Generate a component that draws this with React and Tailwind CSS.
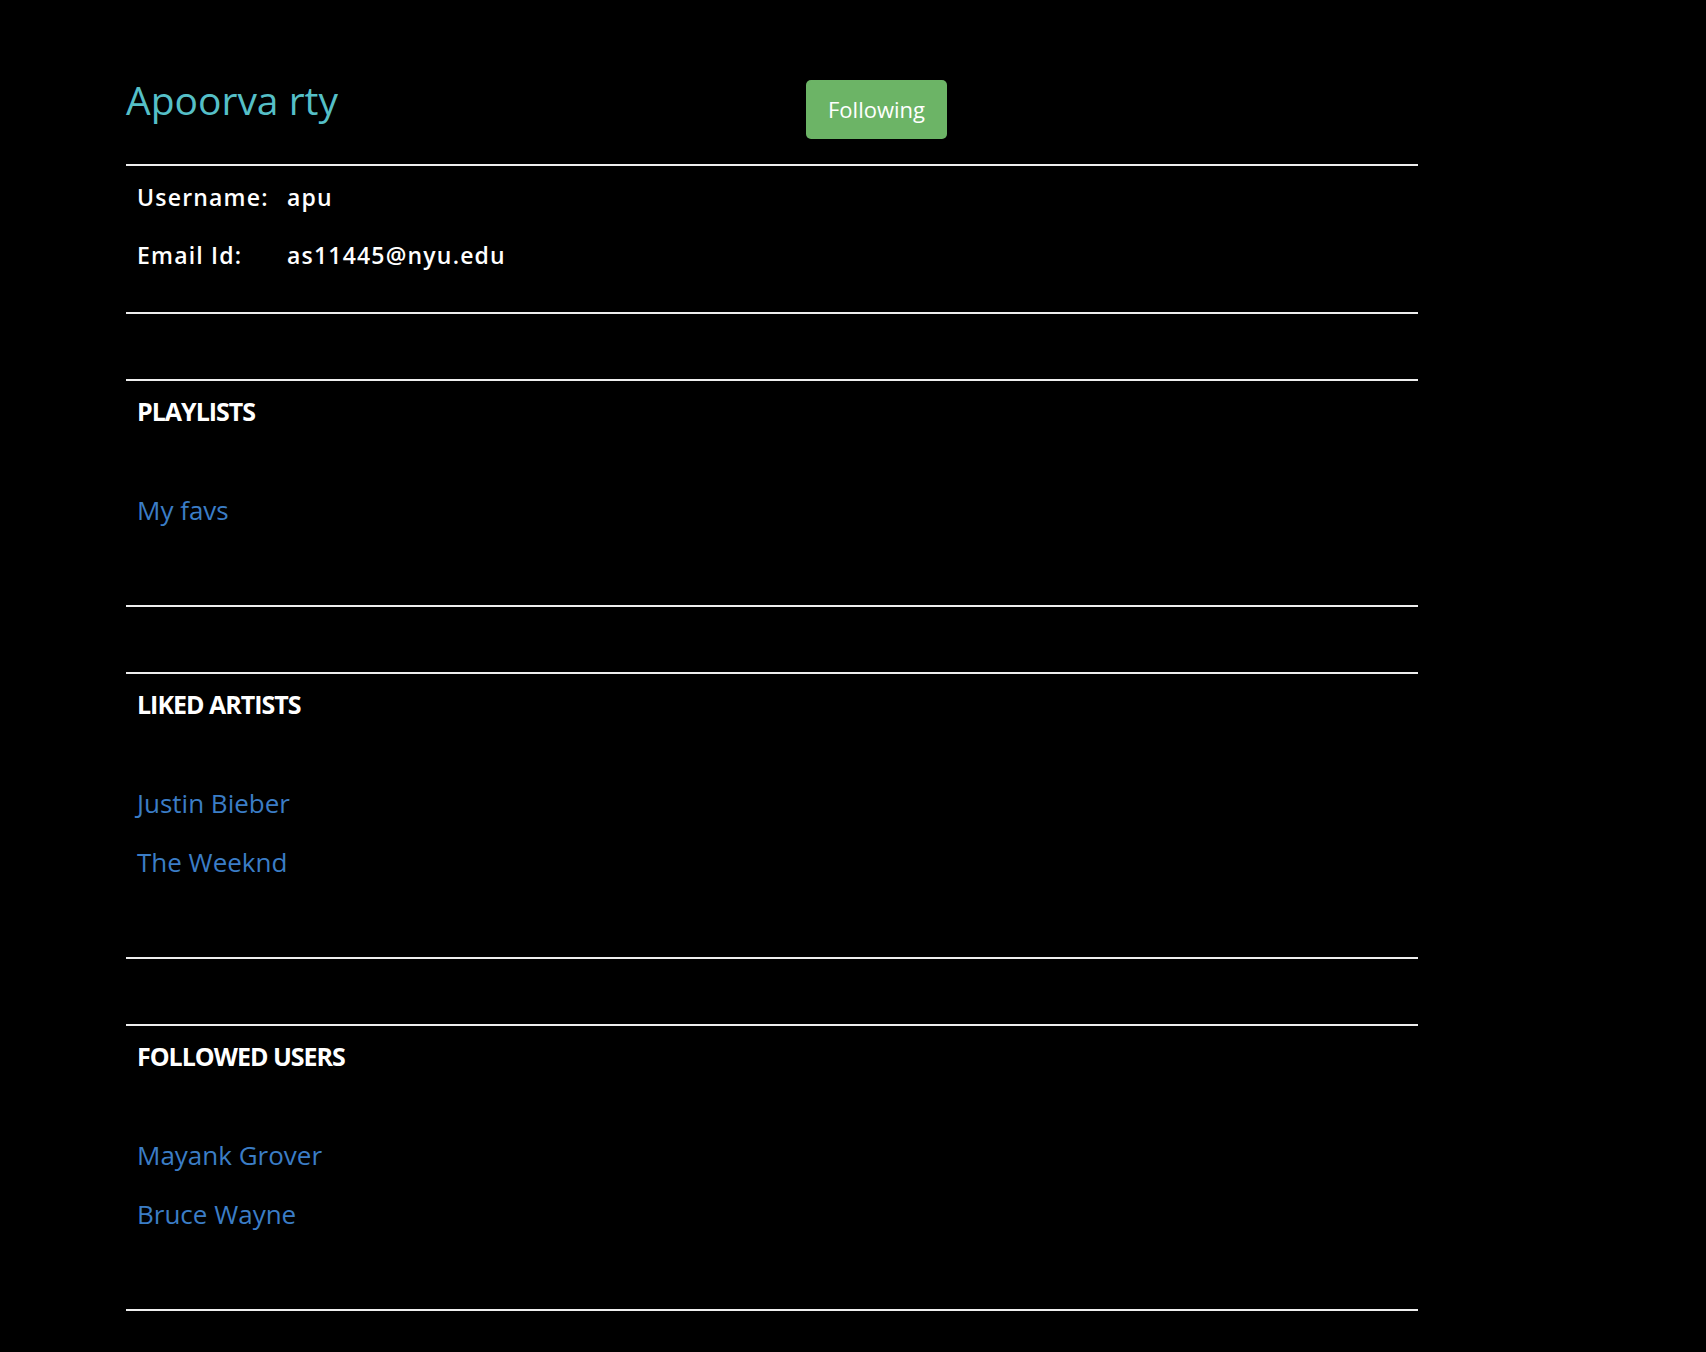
const profile = {
  name: "Apoorva rty",
  username: "apu",
  email: "as11445@nyu.edu",
};

const sections = [
  { title: "PLAYLISTS", items: ["My favs"] },
  { title: "LIKED ARTISTS", items: ["Justin Bieber", "The Weeknd"] },
  { title: "FOLLOWED USERS", items: ["Mayank Grover", "Bruce Wayne"] },
];

function InfoRow({ label, value }) {
  return (
    <div className="flex h-[58px] items-center text-[23px] font-semibold leading-[58px] tracking-[1.2px] text-white">
      <span className="w-[150px] shrink-0">{label}</span>
      <span>{value}</span>
    </div>
  );
}

function ListSection({ title, items }) {
  return (
    <section className="mt-[65px] border-y-2 border-[#eeeeee] pl-[11px] pb-[65px] pt-[15px]">
      <h4 className="text-[25px] font-bold leading-[30px] tracking-[-1px] text-white">
        {title}
      </h4>
      <ul className="mt-[55px]">
        {items.map((item) => (
          <li key={item} className="h-[59px] text-[26px] leading-[59px]">
            <a href="#" className="text-[#3b7dc6] hover:underline">
              {item}
            </a>
          </li>
        ))}
      </ul>
    </section>
  );
}

export default function App() {
  return (
    <div className="min-h-screen bg-black pb-[40px] font-['Open_Sans',sans-serif]">
      <div className="ml-[126px] w-[1292px]">
        {/* header: name + follow state */}
        <div className="flex items-start pt-[80px]">
          <h2 className="w-[680px] shrink-0 text-[39px] leading-[40px] text-[#55bfc7]">
            {profile.name}
          </h2>
          <button className="h-[59px] w-[141px] rounded-[5px] bg-[#6cb466] text-[22px] font-medium text-white">
            Following
          </button>
        </div>

        {/* user details */}
        <div className="mt-[25px] border-y-2 border-[#eeeeee] pl-[11px] pb-[28px] pt-[2px]">
          <InfoRow label="Username:" value={profile.username} />
          <InfoRow label="Email Id:" value={profile.email} />
        </div>

        {sections.map((s) => (
          <ListSection key={s.title} title={s.title} items={s.items} />
        ))}
      </div>
    </div>
  );
}
